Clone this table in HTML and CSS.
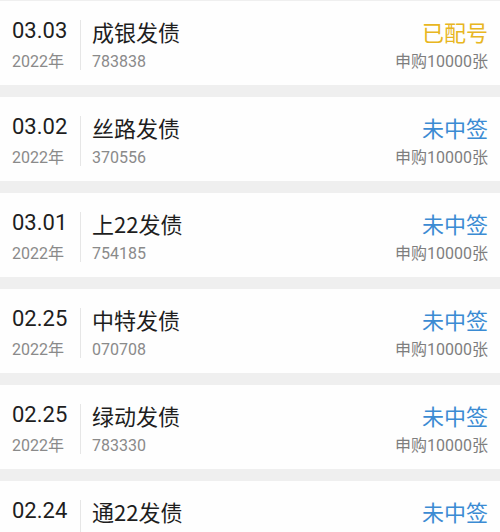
FILE: index.html
```html
<!DOCTYPE html>
<html lang="zh-CN">
<head>
<meta charset="utf-8">
<link rel="stylesheet" href="styles.css">
</head>
<body>
<div class="list">
  <div class="card">
    <div class="date"><div class="md">03.03</div><div class="sub">2022年</div></div>
    <div class="divider"></div>
    <div class="info"><div class="name">成银发债</div><div class="sub">783838</div></div>
    <div class="status"><div class="state yellow">已配号</div><div class="sub">申购10000张</div></div>
  </div>
  <div class="card">
    <div class="date"><div class="md">03.02</div><div class="sub">2022年</div></div>
    <div class="divider"></div>
    <div class="info"><div class="name">丝路发债</div><div class="sub">370556</div></div>
    <div class="status"><div class="state blue">未中签</div><div class="sub">申购10000张</div></div>
  </div>
  <div class="card">
    <div class="date"><div class="md">03.01</div><div class="sub">2022年</div></div>
    <div class="divider"></div>
    <div class="info"><div class="name">上22发债</div><div class="sub">754185</div></div>
    <div class="status"><div class="state blue">未中签</div><div class="sub">申购10000张</div></div>
  </div>
  <div class="card">
    <div class="date"><div class="md">02.25</div><div class="sub">2022年</div></div>
    <div class="divider"></div>
    <div class="info"><div class="name">中特发债</div><div class="sub">070708</div></div>
    <div class="status"><div class="state blue">未中签</div><div class="sub">申购10000张</div></div>
  </div>
  <div class="card">
    <div class="date"><div class="md">02.25</div><div class="sub">2022年</div></div>
    <div class="divider"></div>
    <div class="info"><div class="name">绿动发债</div><div class="sub">783330</div></div>
    <div class="status"><div class="state blue">未中签</div><div class="sub">申购10000张</div></div>
  </div>
  <div class="card">
    <div class="date"><div class="md">02.24</div><div class="sub">2022年</div></div>
    <div class="divider"></div>
    <div class="info"><div class="name">通22发债</div><div class="sub">783330</div></div>
    <div class="status"><div class="state blue">未中签</div><div class="sub">申购10000张</div></div>
  </div>
</div>
</body>
</html>
```
FILE: styles.css
```css
html, body {
  margin: 0;
  padding: 0;
  background: #efefef;
}
body {
  font-family: Roboto, "Noto Sans CJK SC", sans-serif;
  width: 500px;
  height: 532px;
  overflow: hidden;
}
.list {
  display: flex;
  flex-direction: column;
  gap: 12px;
  padding-top: 1px;
}
.card {
  flex: none;
  height: 84px;
  background: #fefefe;
  display: flex;
  align-items: flex-start;
  padding: 0 12px;
  box-sizing: border-box;
}
.date, .info, .status {
  display: flex;
  flex-direction: column;
  padding-top: 16px;
}
.date {
  width: 68px;
}
.divider {
  width: 1px;
  height: 50px;
  margin-top: 19px;
  background: #e6e6e6;
}
.info {
  margin-left: 11px;
  flex: 1;
}
.status {
  align-items: flex-end;
}
.md {
  font-size: 22px;
  line-height: 28px;
  color: #1e1e1e;
}
.name, .state {
  font-family: "Noto Sans CJK SC", sans-serif;
  font-size: 22px;
  line-height: 28px;
  color: #1e1e1e;
}
.sub {
  font-size: 16px;
  line-height: 24px;
  margin-top: 5px;
  color: #8a8a8a;
}
.status .sub {
  color: #7e7e7e;
}
.yellow { color: #e8b621; }
.blue { color: #3b8bd3; }
```
